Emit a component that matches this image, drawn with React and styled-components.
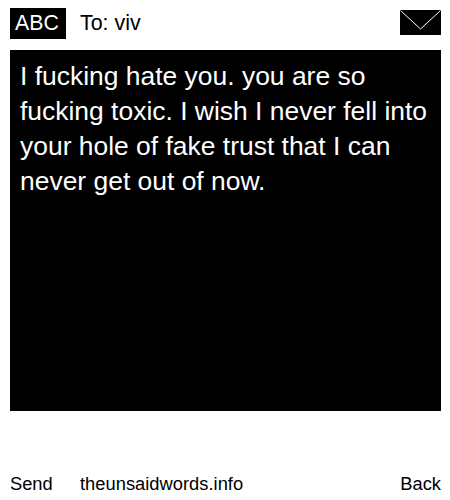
import React from "react";
import styled, { createGlobalStyle } from "styled-components";

const Global = createGlobalStyle`
  html, body { margin: 0; padding: 0; background: #fff; }
  body { font-family: "Liberation Sans", Arial, sans-serif; color: #000; }
`;
const Page = styled.div`
  width: 450px; height: 500px; box-sizing: border-box;
  padding: 8px 9px 0 10px; display: flex; flex-direction: column;
`;
const Header = styled.header`
  height: 31px; display: flex; align-items: flex-start; gap: 14px; margin-bottom: 11px;
`;
const Mode = styled.div`
  width: 56px; height: 31px; box-sizing: border-box; padding-right: 2px; background: #000; color: #fff;
  font-size: 21.3px; line-height: 30px; text-align: center;
`;
const To = styled.div`
  font-size: 21.4px; line-height: 30px; flex: 1;
`;
const Envelope = styled.svg`
  width: 41px; height: 25px; display: block; margin-top: 2px;
`;
const Message = styled.main`
  height: 361px; background: #000; color: #fff; box-sizing: border-box;
  padding: 9px 10px; font-size: 26.45px; line-height: 35px;
`;
const Footer = styled.footer`
  display: flex; align-items: center; margin-top: 62px; font-size: 18.3px; line-height: 22px;
`;
const Send = styled.span` width: 70px; `;
const Site = styled.span` flex: 1; letter-spacing: 0.03px; `;

export default function App() {
  return (
    <Page>
      <Global />
      <Header>
        <Mode>ABC</Mode>
        <To>To: viv</To>
        <Envelope viewBox="0 0 41 25">
          <rect width="41" height="25" fill="#000" />
          <path d="M0.5 0.5 L20.5 19 L40.5 0.5" fill="none" stroke="#fff" strokeWidth="1" />
        </Envelope>
      </Header>
      <Message>I fucking hate you. you are so fucking toxic. I wish I never fell into your hole of fake trust that I can never get out of now.</Message>
      <Footer>
        <Send>Send</Send>
        <Site>theunsaidwords.info</Site>
        <span>Back</span>
      </Footer>
    </Page>
  );
}
